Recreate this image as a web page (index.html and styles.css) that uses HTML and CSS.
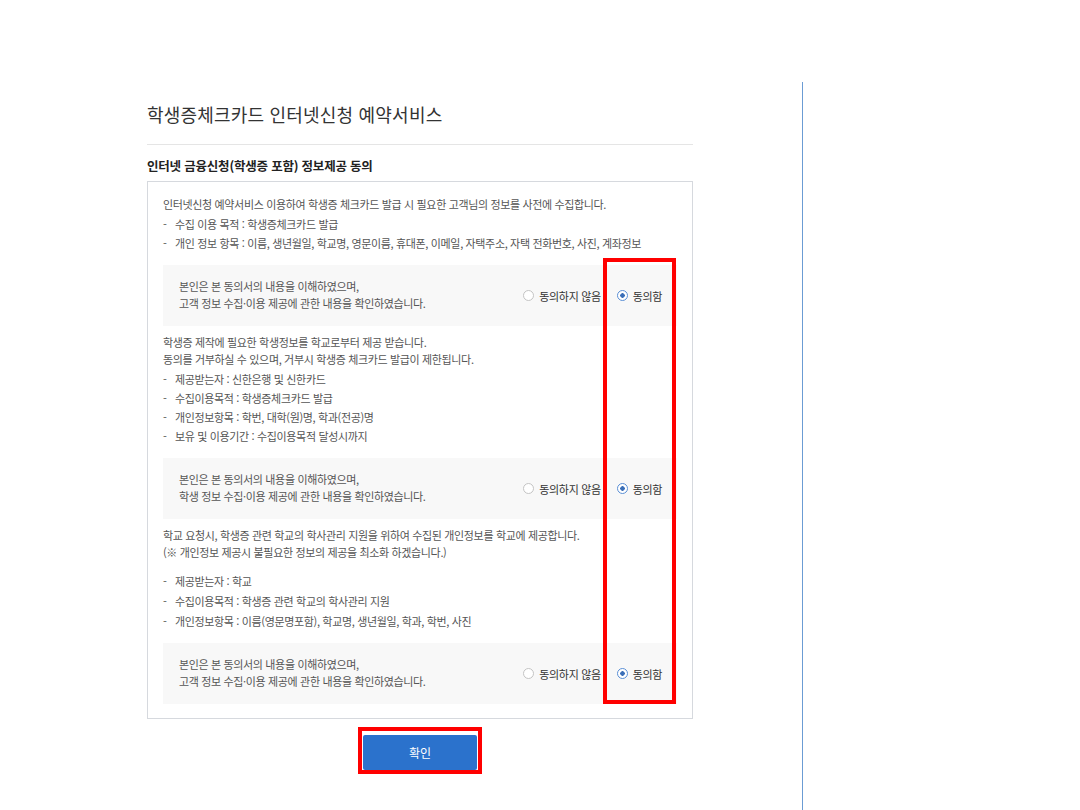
FILE: index.html
```html
<!DOCTYPE html>
<html lang="ko">
<head>
    <meta charset="utf-8">
    <title>학생증체크카드 인터넷신청 예약서비스</title>
    <link rel="stylesheet" href="styles.css">
</head>
<body>
<div class="page">
    <div class="content">
        <h1 class="title">학생증체크카드 인터넷신청 예약서비스</h1>
        <h2 class="subtitle">인터넷 금융신청(학생증 포함) 정보제공 동의</h2>

        <div class="agree-box">
            <div class="terms">
                <p>인터넷신청 예약서비스 이용하여 학생증 체크카드 발급 시 필요한 고객님의 정보를 사전에 수집합니다.</p>
                <ul>
                    <li>수집 이용 목적 : 학생증체크카드 발급</li>
                    <li>개인 정보 항목 : 이름, 생년월일, 학교명, 영문이름, 휴대폰, 이메일, 자택주소, 자택 전화번호, 사진, 계좌정보</li>
                </ul>
            </div>
            <div class="confirm">
                <p>본인은 본 동의서의 내용을 이해하였으며,<br>고객 정보 수집·이용 제공에 관한 내용을 확인하였습니다.</p>
                <div class="choices">
                    <label class="radio"><span class="dot"></span>동의하지 않음</label>
                    <label class="radio checked"><span class="dot"></span>동의함</label>
                </div>
            </div>

            <div class="terms">
                <p>학생증 제작에 필요한 학생정보를 학교로부터 제공 받습니다.<br>동의를 거부하실 수 있으며, 거부시 학생증 체크카드 발급이 제한됩니다.</p>
                <ul>
                    <li>제공받는자 : 신한은행 및 신한카드</li>
                    <li>수집이용목적 : 학생증체크카드 발급</li>
                    <li>개인정보항목 : 학번, 대학(원)명, 학과(전공)명</li>
                    <li>보유 및 이용기간 : 수집이용목적 달성시까지</li>
                </ul>
            </div>
            <div class="confirm">
                <p>본인은 본 동의서의 내용을 이해하였으며,<br>학생 정보 수집·이용 제공에 관한 내용을 확인하였습니다.</p>
                <div class="choices">
                    <label class="radio"><span class="dot"></span>동의하지 않음</label>
                    <label class="radio checked"><span class="dot"></span>동의함</label>
                </div>
            </div>

            <div class="terms">
                <p>학교 요청시, 학생증 관련 학교의 학사관리 지원을 위하여 수집된 개인정보를 학교에 제공합니다.<br>(※ 개인정보 제공시 불필요한 정보의 제공을 최소화 하겠습니다.)</p>
                <ul class="spaced">
                    <li>제공받는자 : 학교</li>
                    <li>수집이용목적 : 학생증 관련 학교의 학사관리 지원</li>
                    <li>개인정보항목 : 이름(영문명포함), 학교명, 생년월일, 학과, 학번, 사진</li>
                </ul>
            </div>
            <div class="confirm">
                <p>본인은 본 동의서의 내용을 이해하였으며,<br>고객 정보 수집·이용 제공에 관한 내용을 확인하였습니다.</p>
                <div class="choices">
                    <label class="radio"><span class="dot"></span>동의하지 않음</label>
                    <label class="radio checked"><span class="dot"></span>동의함</label>
                </div>
            </div>

            <div class="mark-column"></div>
        </div>

        <div class="button-row">
            <span class="mark-button"><button type="button" class="btn-ok">확인</button></span>
        </div>
    </div>
    <div class="side-line"></div>
</div>
</body>
</html>
```

FILE: styles.css
```css
body {
    margin: 0;
    font-family: "Noto Sans CJK KR", "Noto Sans", sans-serif;
    color: #555;
    background: #fff;
}

.page {
    display: flex;
    min-height: 810px;
    padding-left: 147px;
}

.content {
    width: 546px;
    padding-top: 100px;
}

.title {
    margin: 0;
    padding-bottom: 16px;
    border-bottom: 1px solid #e5e5e5;
    font-size: 18px;
    font-weight: normal;
    line-height: 28px;
    color: #333;
    letter-spacing: 0.2px;
}

.subtitle {
    margin: 11px 0 0;
    font-size: 12.5px;
    line-height: 20px;
    color: #222;
    letter-spacing: -0.2px;
}

.agree-box {
    position: relative;
    margin-top: 5px;
    padding: 5px 15px 14px;
    border: 1px solid #d6d9de;
    font-size: 11px;
    letter-spacing: -0.35px;
}

.terms {
    padding: 8px 0 12px;
}

.terms:first-child {
    padding-top: 9px;
}

.terms p {
    margin: 0;
    line-height: 17px;
}

.terms ul {
    margin: 2px 0 0;
    padding: 0;
    list-style: none;
}

.terms li {
    line-height: 19px;
}

.terms ul.spaced {
    margin-top: 10px;
}

.terms ul.spaced li {
    line-height: 20px;
}

.terms li::before {
    content: "-";
    display: inline-block;
    width: 12px;
}

.confirm {
    display: flex;
    align-items: center;
    justify-content: space-between;
    height: 61px;
    padding: 0 15px 0 16px;
    background: #f8f8f8;
}

.confirm p {
    margin: 0 0 2px;
    line-height: 17px;
}

.choices {
    display: flex;
    gap: 16px;
    color: #333;
}

.radio {
    display: flex;
    align-items: center;
    gap: 5px;
}

.dot {
    box-sizing: border-box;
    width: 11px;
    height: 11px;
    border: 1px solid #c4c4c4;
    border-radius: 50%;
    background: #fff;
}

.radio.checked .dot {
    border-color: #5a8fd6;
    background: radial-gradient(circle, #3b6fb8 0 2px, #fff 2.5px);
}

.mark-column {
    position: absolute;
    left: 455px;
    top: 76px;
    width: 65px;
    height: 438px;
    border: 4px solid #f00;
}

.button-row {
    display: flex;
    justify-content: center;
    margin-top: 8px;
}

.mark-button {
    display: inline-block;
    padding: 4px 1px 0;
    border: 4px solid #f00;
}

.btn-ok {
    display: block;
    width: 114px;
    height: 35px;
    border: none;
    border-radius: 2px;
    background: #2b72cc;
    color: #fff;
    font-family: inherit;
    font-size: 12px;
}

.side-line {
    margin: 82px 0 0 109px;
    border-left: 1px solid #6b9cd4;
}
```
